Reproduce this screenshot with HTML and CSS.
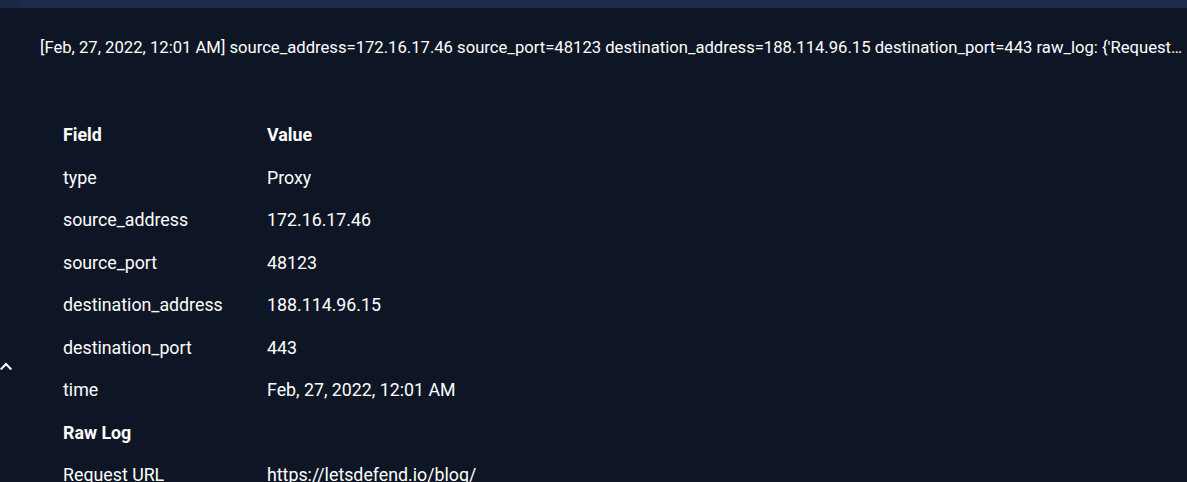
FILE: index.html
```html
<!DOCTYPE html>
<html>
<head>
<meta charset="utf-8">
<link rel="stylesheet" href="styles.css">
</head>
<body>
<div class="topbar"><div class="topbar-corner"></div></div>
<div class="panel">
  <div class="logline">[Feb, 27, 2022, 12:01 AM] source_address=172.16.17.46 source_port=48123 destination_address=188.114.96.15 destination_port=443 raw_log: {'Request…</div>
  <div class="table">
    <div class="row head"><div class="f">Field</div><div class="v">Value</div></div>
    <div class="row"><div class="f">type</div><div class="v">Proxy</div></div>
    <div class="row"><div class="f">source_address</div><div class="v">172.16.17.46</div></div>
    <div class="row"><div class="f">source_port</div><div class="v">48123</div></div>
    <div class="row"><div class="f">destination_address</div><div class="v">188.114.96.15</div></div>
    <div class="row"><div class="f">destination_port</div><div class="v">443</div></div>
    <div class="row"><div class="f">time</div><div class="v">Feb, 27, 2022, 12:01 AM</div></div>
    <div class="row head"><div class="f">Raw Log</div><div class="v"></div></div>
    <div class="row"><div class="f">Request URL</div><div class="v">https://letsdefend.io/blog/</div></div>
  </div>
  <div class="caret">
    <svg width="13" height="11" viewBox="0 0 13 11"><path d="M0.7 8.5 L6 3 L11.3 8.5" fill="none" stroke="#ffffff" stroke-width="2"/></svg>
  </div>
</div>
</body>
</html>
```

FILE: styles.css
```css
html, body {
  margin: 0;
  padding: 0;
  height: 100%;
  overflow: hidden;
}
body {
  background: #0e1626;
  font-family: Roboto, "Liberation Sans", sans-serif;
  color: #ffffff;
}
.topbar {
  height: 8px;
  background: #1c2b49;
  position: relative;
}
.topbar-corner {
  position: absolute;
  left: 0;
  top: 0;
  width: 20px;
  height: 8px;
  background: #1a2743;
  border-bottom-right-radius: 6px;
}
.panel {
  position: relative;
  padding-top: 1px;
}
.logline {
  margin: 28px 0 0 40px;
  font-size: 16.65px;
  line-height: 22px;
  white-space: nowrap;
}
.table {
  margin: 55px 0 0 63px;
  display: flex;
  flex-direction: column;
}
.row {
  display: flex;
  height: 42.5px;
  align-items: center;
  font-size: 17.8px;
  line-height: 22px;
}
.row .f {
  width: 204px;
}
.head {
  font-weight: 700;
}
.caret {
  position: absolute;
  left: 0;
  top: 353px;
  line-height: 0;
}
```
